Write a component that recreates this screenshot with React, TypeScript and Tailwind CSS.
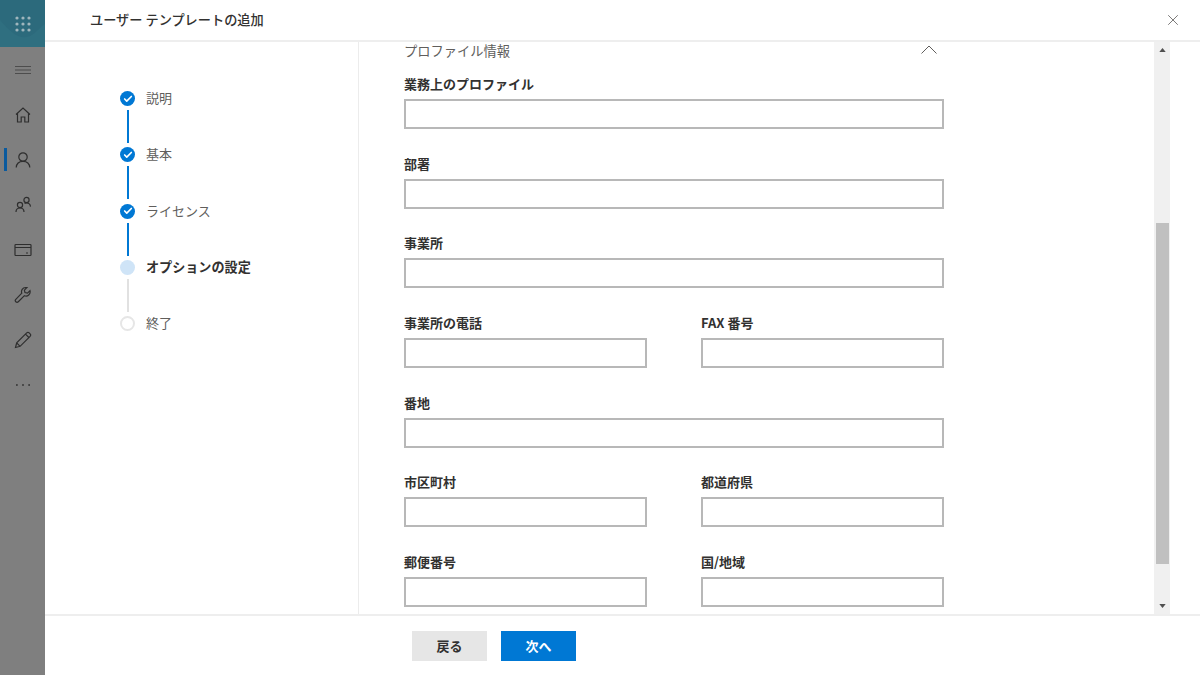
import { Check, X } from 'lucide-react'

const font = { fontFamily: '"Noto Sans CJK JP", "Liberation Sans", sans-serif' }

const steps = [
  { label: '説明', state: 'done' },
  { label: '基本', state: 'done' },
  { label: 'ライセンス', state: 'done' },
  { label: 'オプションの設定', state: 'current' },
  { label: '終了', state: 'todo' },
]

const rows = [
  ['業務上のプロファイル'],
  ['部署'],
  ['事業所'],
  ['事業所の電話', 'FAX 番号'],
  ['番地'],
  ['市区町村', '都道府県'],
  ['郵便番号', '国/地域'],
]

function NavIcon({ children }: { children: React.ReactNode }) {
  return (
    <svg viewBox="0 0 18 18" className="h-[18px] w-[18px]" fill="none" stroke="#2e2e2e" strokeWidth="1.2">
      {children}
    </svg>
  )
}

function Sidebar() {
  return (
    <aside className="flex w-[45px] shrink-0 flex-col bg-[#7f7f7f]">
      <div className="relative flex h-[47px] items-center justify-center overflow-hidden bg-[#2c6a7c]">
        <svg viewBox="0 0 45 47" className="absolute inset-0 h-full w-full">
          <path d="M0 20 C12 34 20 40 30 36 C36 33 41 26 45 24 L45 47 L0 47 Z" fill="#2f6f80" />
        </svg>
        <svg viewBox="0 0 16 16" className="relative h-[16px] w-[16px]" fill="#9fb6bd">
          {[2, 8, 14].map((y) =>
            [2, 8, 14].map((x) => <circle key={`${x}-${y}`} cx={x} cy={y} r="1.6" />),
          )}
        </svg>
      </div>
      <div className="flex h-[45px] items-center justify-center">
        <svg viewBox="0 0 16 10" className="h-[10px] w-[16px]" stroke="#4d4d4d" strokeWidth="1.1">
          <path d="M0 1.500h16M0 5h16M0 8.500h16" />
        </svg>
      </div>
      <div className="flex h-[45px] items-center justify-center">
        <NavIcon>
          <path d="M2 8.500 9 2l7 6.500M3.500 7.500V16h3.700v-5h3.600v5h3.700V7.500" />
        </NavIcon>
      </div>
      <div className="relative flex h-[45px] items-center justify-center">
        <div className="absolute left-[4px] top-[11px] h-[23px] w-[3px] bg-[#0a5a9e]" />
        <NavIcon>
          <circle cx="9" cy="6" r="4.200" />
          <path d="M2.200 16.500c.3-3.800 3-6.200 6.800-6.200s6.500 2.400 6.800 6.200" />
        </NavIcon>
      </div>
      <div className="flex h-[45px] items-center justify-center">
        <NavIcon>
          <circle cx="6" cy="9" r="2.600" />
          <path d="M2 16c0-2.500 1.600-4 4-4s4 1.500 4 4" />
          <circle cx="12.500" cy="4" r="2.600" />
          <path d="M10.500 7.400c.6-.3 1.300-.4 2-.4 2.200 0 3.800 1.400 4 3.600" />
        </NavIcon>
      </div>
      <div className="flex h-[45px] items-center justify-center">
        <NavIcon>
          <rect x="1" y="3.500" width="16" height="11" rx="0.800" />
          <path d="M1 6.500h16M12 12h2" />
        </NavIcon>
      </div>
      <div className="flex h-[45px] items-center justify-center">
        <NavIcon>
          <path d="M11.500 1.500a4.200 4.200 0 0 0-3.700 5.700L1.800 13.300a1.800 1.800 0 0 0 0 2.500 1.800 1.800 0 0 0 2.500 0l6.100-6.100a4.200 4.200 0 0 0 5.600-5l-2.500 2.500-2.500-.6-.6-2.500 2.500-2.500z" />
        </NavIcon>
      </div>
      <div className="flex h-[45px] items-center justify-center">
        <NavIcon>
          <path d="M1.500 16.500l1.200-4.600L12.700 1.900a1.800 1.800 0 0 1 2.500 0l.9.900a1.800 1.800 0 0 1 0 2.500L6.100 15.300l-4.600 1.200zM2.700 11.900l3.400 3.400M11.500 3.100l3.400 3.400" />
        </NavIcon>
      </div>
      <div className="flex h-[45px] items-center justify-center">
        <svg viewBox="0 0 16 2" className="h-[2px] w-[14px]" fill="#3d3d3d">
          <rect x="0" width="2" height="2" />
          <rect x="7" width="2" height="2" />
          <rect x="14" width="2" height="2" />
        </svg>
      </div>
    </aside>
  )
}

function Stepper() {
  return (
    <nav className="w-[314px] shrink-0 border-r border-[#ececec] pl-[75px] pt-[49px]">
      {steps.map((step, index) => (
        <div key={step.label}>
          <div className="flex h-[15px] items-center">
            {step.state === 'done' ? (
              <span className="flex h-[15px] w-[15px] items-center justify-center rounded-full bg-[#0078d4]">
                <Check className="h-[10px] w-[10px] text-white" strokeWidth={4} />
              </span>
            ) : step.state === 'current' ? (
              <span className="h-[15px] w-[15px] rounded-full bg-[#cfe4f7]" />
            ) : (
              <span className="h-[15px] w-[15px] rounded-full border-2 border-[#e6e6e6]" />
            )}
            <span
              className={
                step.state === 'current'
                  ? 'ml-[11px] -translate-y-[1px] text-[13.100px] font-bold leading-[15px] text-[#323130]'
                  : 'ml-[11px] -translate-y-[1px] text-[13px] leading-[15px] text-[#605e5c]'
              }
            >
              {step.label}
            </span>
          </div>
          {index < steps.length - 1 ? (
            <div
              className={
                step.state === 'done'
                  ? 'ml-[6.5px] mt-[4px] mb-[4.25px] h-[33px] w-[2px] bg-[#0078d4]'
                  : 'ml-[6.5px] mt-[4px] mb-[4.25px] h-[33px] w-[2px] bg-[#e1e1e1]'
              }
            />
          ) : null}
        </div>
      ))}
    </nav>
  )
}

function Field({ label }: { label: string }) {
  return (
    <div className="min-w-0 flex-1">
      <label className="block text-[13px] font-bold leading-[19px] text-[#323130]">{label}</label>
      <div className="mt-[6px] h-[30px] border-2 border-[#b8b8b8] bg-white" />
    </div>
  )
}

function Scrollbar() {
  return (
    <div className="relative mr-[30px] flex w-[16px] shrink-0 flex-col items-center bg-[#f0f0f0]">
      <svg viewBox="0 0 8 5" className="absolute top-[6px] h-[4px] w-[7px]" fill="#505050">
        <path d="M4 0 8 5H0z" />
      </svg>
      <div className="mt-[181px] h-[341px] w-[13px] bg-[#c0c0c0]" />
      <svg viewBox="0 0 8 5" className="absolute bottom-[6px] h-[4px] w-[7px]" fill="#505050">
        <path d="M0 0h8L4 5z" />
      </svg>
    </div>
  )
}

export default function App() {
  return (
    <div className="flex h-[675px] w-[1200px] overflow-hidden bg-white" style={font}>
      <Sidebar />
      <main className="flex min-w-0 flex-1 flex-col">
        <header className="flex h-[42px] shrink-0 items-center justify-between border-b-2 border-[#eeeeee] pl-[45px] pr-[18px]">
          <h1 className="text-[13.200px] font-medium text-[#323130]">ユーザー テンプレートの追加</h1>
          <X className="h-[18px] w-[18px] text-[#605e5c]" strokeWidth={1.1} />
        </header>

        <div className="flex min-h-0 flex-1">
          <Stepper />
          <div className="min-w-0 flex-1 overflow-hidden pl-[45px]">
            <div className="w-[540px]">
              <div className="flex h-[32px] items-start justify-between pr-[7px]">
                <span className="-mt-[1px] text-[13.250px] leading-[20px] text-[#605e5c]">プロファイル情報</span>
                <svg viewBox="0 0 16 9" className="mt-[3px] h-[9px] w-[16px]" fill="none" stroke="#605e5c">
                  <path d="M0.500 8.500 8 1l7.500 7.500" />
                </svg>
              </div>
              <div className="flex flex-col gap-[24.67px]">
                {rows.map((row) => (
                  <div key={row[0]} className="flex gap-[54px]">
                    {row.map((label) => (
                      <Field key={label} label={label} />
                    ))}
                  </div>
                ))}
              </div>
            </div>
          </div>
          <Scrollbar />
        </div>

        <footer className="flex h-[61px] shrink-0 items-start gap-[14px] border-t-2 border-[#eeeeee] pl-[367px] pt-[15px]">
          <button type="button" className="h-[30px] w-[75px] bg-[#e6e6e6] text-[13px] font-bold text-[#323130]">
            戻る
          </button>
          <button type="button" className="h-[30px] w-[75px] bg-[#0078d4] text-[13px] font-bold text-white">
            次へ
          </button>
        </footer>
      </main>
    </div>
  )
}
